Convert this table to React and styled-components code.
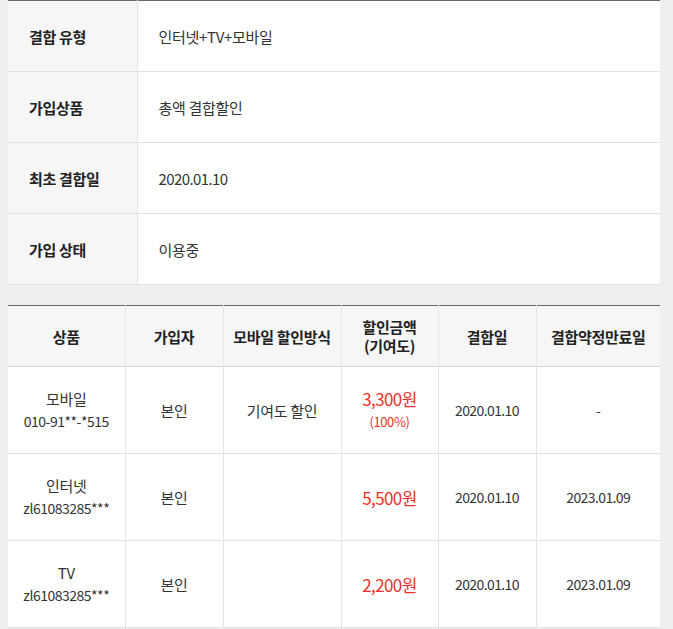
import React from 'react';
import styled, { createGlobalStyle } from 'styled-components';

const GlobalStyle = createGlobalStyle`
  html, body {
    margin: 0;
    padding: 0;
    background: #efefef;
  }
  body {
    font-family: "Noto Sans CJK KR", "Noto Sans", sans-serif;
    color: #333;
  }
`;

const Wrapper = styled.div`
  width: 652px;
  margin-left: 8px;
  display: flex;
  flex-direction: column;
  gap: 20px;
`;

const Table = styled.table`
  width: 100%;
  border-collapse: collapse;
  table-layout: fixed;
  background: #fff;
  border-top: 1px solid #666;
`;

const Row = styled.tr`
  height: ${(p) => p.$h}px;
  border-bottom: 1px solid ${(p) => (p.$head ? '#d0d0d0' : '#e0e0e0')};
`;

const Label = styled.th`
  background: #f6f6f6;
  border-right: 1px solid #e6e6e6;
  padding: 0 0 0 21px;
  text-align: left;
  font-size: 15px;
  font-weight: 700;
  color: #222;
  letter-spacing: -0.3px;
`;

const Value = styled.td`
  padding: 0 0 0 21px;
  font-size: 15px;
  color: #333;
  letter-spacing: ${(p) => (p.$num ? '-0.6px' : '-0.3px')};
`;

const HeadCell = styled.th`
  background: #f6f6f6;
  border-left: 1px solid #e6e6e6;
  padding: 0;
  font-size: 15px;
  font-weight: 700;
  color: #222;
  line-height: 19px;
  letter-spacing: -0.3px;
  &:first-child {
    border-left: none;
  }
`;

const Cell = styled.td`
  border-left: 1px solid #e6e6e6;
  padding: 0;
  text-align: center;
  font-size: ${(p) => (p.$num ? '14px' : '15px')};
  letter-spacing: ${(p) => (p.$num ? '-0.6px' : '-0.3px')};
  color: #333;
  line-height: 23px;
  &:first-child {
    border-left: none;
  }
`;

const Sub = styled.span`
  display: block;
  font-size: 14px;
  letter-spacing: -0.5px;
`;

const Amount = styled.span`
  display: block;
  color: #f0302a;
  font-size: 17px;
  letter-spacing: -0.6px;
`;

const Ratio = styled.span`
  display: block;
  color: #f0302a;
  font-size: 13px;
  letter-spacing: -0.4px;
`;

const info = [
  { label: '결합 유형', value: '인터넷+TV+모바일' },
  { label: '가입상품', value: '총액 결합할인' },
  { label: '최초 결합일', value: '2020.01.10', num: true },
  { label: '가입 상태', value: '이용중' },
];

const columns = [117, 98, 118, 97, 98, 124];

const products = [
  { name: '모바일', id: '010-91**-*515', owner: '본인', method: '기여도 할인', amount: '3,300원', ratio: '(100%)', start: '2020.01.10', end: '-' },
  { name: '인터넷', id: 'zl61083285***', owner: '본인', method: '', amount: '5,500원', start: '2020.01.10', end: '2023.01.09' },
  { name: 'TV', id: 'zl61083285***', owner: '본인', method: '', amount: '2,200원', start: '2020.01.10', end: '2023.01.09' },
];

export default function App() {
  return (
    <>
      <GlobalStyle />
      <Wrapper>
        <Table>
          <colgroup>
            <col style={{ width: 129 }} />
            <col />
          </colgroup>
          <tbody>
            {info.map((row) => (
              <Row key={row.label} $h={71}>
                <Label>{row.label}</Label>
                <Value $num={row.num}>{row.value}</Value>
              </Row>
            ))}
          </tbody>
        </Table>

        <Table>
          <colgroup>
            {columns.map((w, i) => (
              <col key={i} style={{ width: w }} />
            ))}
          </colgroup>
          <thead>
            <Row $h={61} $head>
              <HeadCell>상품</HeadCell>
              <HeadCell>가입자</HeadCell>
              <HeadCell>모바일 할인방식</HeadCell>
              <HeadCell>할인금액<br />(기여도)</HeadCell>
              <HeadCell>결합일</HeadCell>
              <HeadCell>결합약정만료일</HeadCell>
            </Row>
          </thead>
          <tbody>
            {products.map((p) => (
              <Row key={p.name} $h={87}>
                <Cell>
                  {p.name}
                  <Sub>{p.id}</Sub>
                </Cell>
                <Cell>{p.owner}</Cell>
                <Cell>{p.method}</Cell>
                <Cell>
                  <Amount>{p.amount}</Amount>
                  {p.ratio && <Ratio>{p.ratio}</Ratio>}
                </Cell>
                <Cell $num>{p.start}</Cell>
                <Cell $num>{p.end}</Cell>
              </Row>
            ))}
          </tbody>
        </Table>
      </Wrapper>
    </>
  );
}
